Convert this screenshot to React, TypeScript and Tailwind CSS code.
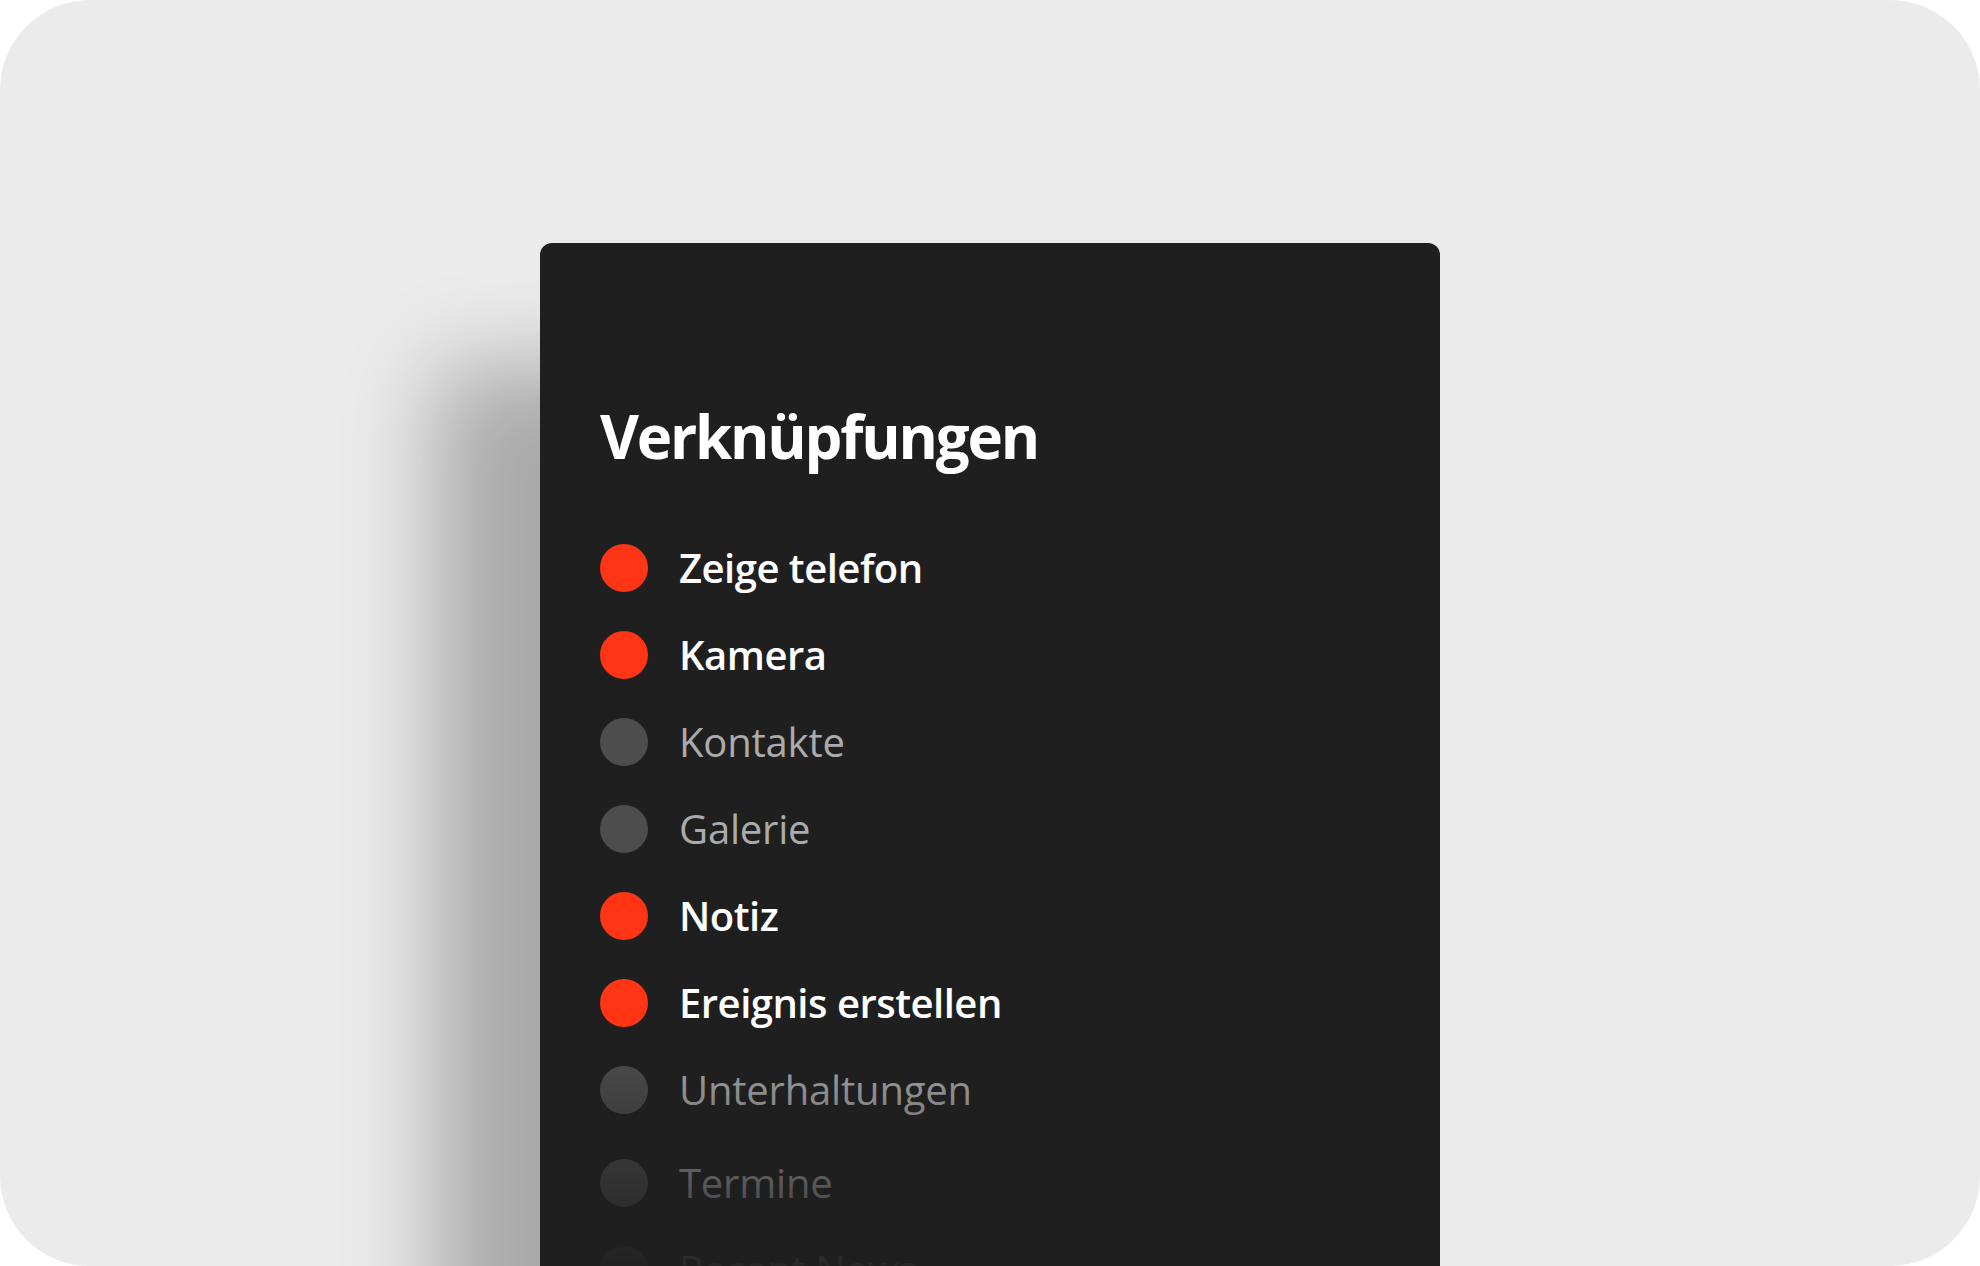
import React from 'react';

type Shortcut = {
  label: string;
  active: boolean;
  shift?: string;
};

const shortcuts: Shortcut[] = [
  { label: 'Zeige telefon', active: true },
  { label: 'Kamera', active: true },
  { label: 'Kontakte', active: false },
  { label: 'Galerie', active: false },
  { label: 'Notiz', active: true },
  { label: 'Ereignis erstellen', active: true },
  { label: 'Unterhaltungen', active: false },
  { label: 'Termine', active: false, shift: 'mt-[6px]' },
  { label: 'Recent News', active: false },
];

function ShortcutRow({ item }: { item: Shortcut }) {
  return (
    <li className={`flex h-[87px] shrink-0 items-center gap-[31px] ${item.shift ?? ''}`}>
      <span
        className={`h-[48px] w-[48px] shrink-0 rounded-full ${item.active ? 'bg-[#ff3516]' : 'bg-[#4d4d4d]'}`}
      />
      <span
        className={`text-[40px] leading-none whitespace-nowrap ${item.active ? 'font-semibold tracking-[-0.5px] text-white' : 'font-normal tracking-[-0.2px] text-[#ababab]'}`}
      >
        {item.label}
      </span>
    </li>
  );
}

export default function App() {
  return (
    <div className="h-[1266px] w-[1980px] overflow-hidden bg-white font-['Open_Sans',_'Noto_Sans',_sans-serif]">
      <div className="flex h-full w-full rounded-[90px] bg-[#ebebeb] pl-[540px] pt-[243px] overflow-hidden">
        <section className="relative flex h-[1100px] w-[900px] shrink-0 flex-col rounded-t-[12px] bg-[#1f1f1f] pl-[60px] pt-[163px] shadow-[-105px_122px_90px_rgba(0,0,0,0.28)]">
          <h1 className="text-[60px] font-bold leading-none tracking-[-2.2px] text-white">
            Verknüpfungen
          </h1>

          {/* list of shortcuts */}
          <ul className="mt-[58px] flex flex-col">
            {shortcuts.map((item) => (
              <ShortcutRow key={item.label} item={item} />
            ))}
          </ul>

          {/* fade at the bottom */}
          <div className="pointer-events-none absolute left-0 right-0 top-[797px] h-[240px] bg-linear-to-b from-transparent to-[#1f1f1f]" />
        </section>
      </div>
    </div>
  );
}
